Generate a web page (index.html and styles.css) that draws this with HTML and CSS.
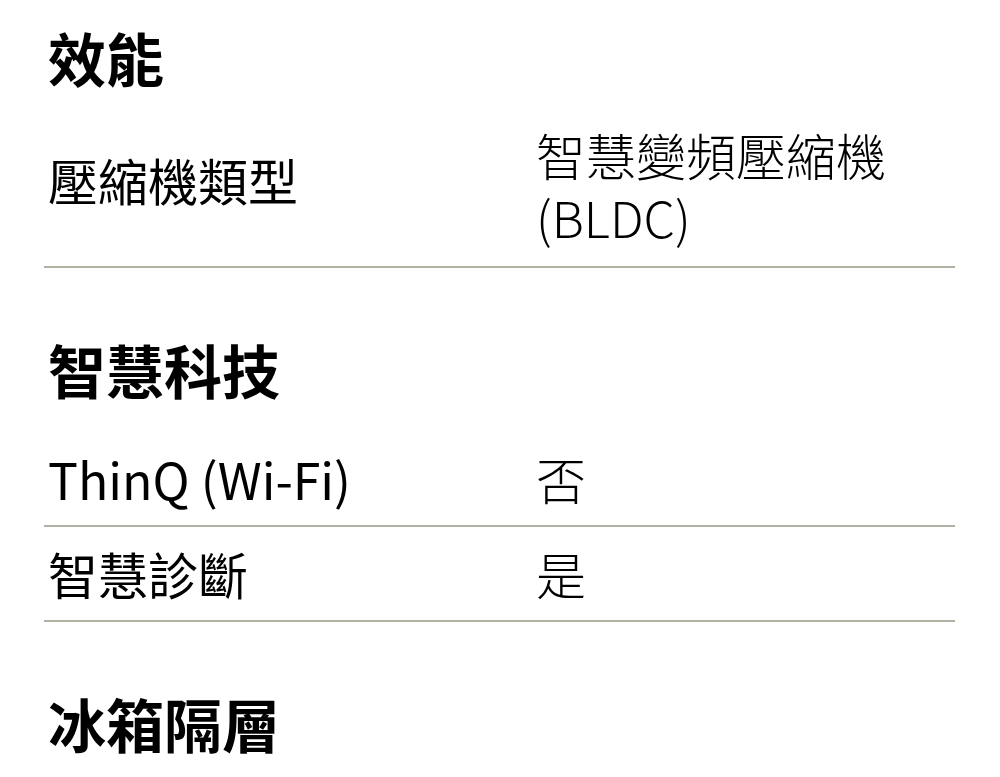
FILE: index.html
```html
<!DOCTYPE html>
<html lang="zh-Hant">
<head>
<meta charset="utf-8">
<title>規格</title>
<link rel="stylesheet" href="styles.css">
</head>
<body>
<div class="spec">
  <section class="group">
    <h2 class="group-title">效能</h2>
    <div class="row row--wrap">
      <div class="label">壓縮機類型</div>
      <div class="value">智慧變頻壓縮機(BLDC)</div>
    </div>
  </section>
  <section class="group">
    <h2 class="group-title">智慧科技</h2>
    <div class="row">
      <div class="label">ThinQ (Wi-Fi)</div>
      <div class="value">否</div>
    </div>
    <div class="row">
      <div class="label">智慧診斷</div>
      <div class="value">是</div>
    </div>
  </section>
  <section class="group">
    <h2 class="group-title">冰箱隔層</h2>
  </section>
</div>
</body>
</html>
```

FILE: styles.css
```css
html, body {
  margin: 0;
  padding: 0;
  background: #ffffff;
}

body {
  font-family: "Noto Sans CJK TC", "Noto Sans", sans-serif;
  color: #000000;
  overflow: hidden;
}

.spec {
  padding: 22px 45px 0 44px;
}

.group + .group {
  margin-top: 66px;
}

.group-title {
  margin: 0 0 28px;
  padding-left: 4px;
  font-size: 58px;
  line-height: 70px;
  font-weight: 700;
}

.row {
  display: grid;
  grid-template-columns: 492px 1fr;
  align-items: center;
  padding: 15px 0 16px;
  border-bottom: 2px solid #b3b1a3;
}

.row--wrap {
  padding: 3px 0 19px;
}

.row--wrap .label {
  margin-bottom: 12px;
}

.label {
  padding-left: 4px;
  font-size: 50px;
  line-height: 62px;
  font-weight: 400;
}

.value {
  font-size: 50px;
  line-height: 62px;
  font-weight: 300;
}
```
